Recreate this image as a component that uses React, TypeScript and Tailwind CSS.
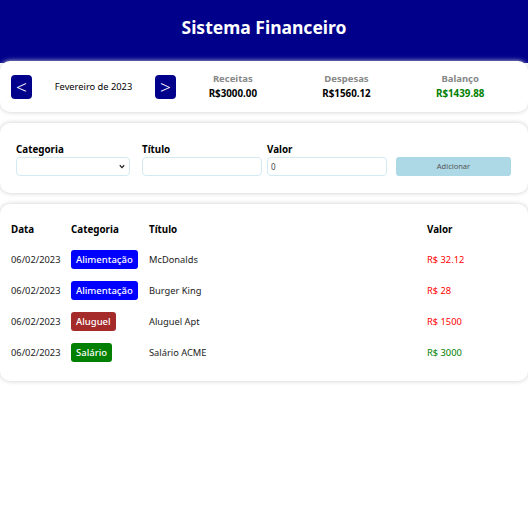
import { useState } from "react";

interface Item {
  date: string;
  category: "food" | "rent" | "salary";
  title: string;
  value: number;
}

const categories = {
  food: { title: "Alimentação", color: "bg-[#0000ff]", expense: true },
  rent: { title: "Aluguel", color: "bg-[#a52a2a]", expense: true },
  salary: { title: "Salário", color: "bg-[#008000]", expense: false },
};

const items: Item[] = [
  { date: "06/02/2023", category: "food", title: "McDonalds", value: 32.12 },
  { date: "06/02/2023", category: "food", title: "Burger King", value: 28 },
  { date: "06/02/2023", category: "rent", title: "Aluguel Apt", value: 1500 },
  { date: "06/02/2023", category: "salary", title: "Salário ACME", value: 3000 },
];

function ResumeItem({ title, value, color }: { title: string; value: number; color?: string }) {
  return (
    <div className="flex-1 flex flex-col items-center">
      <div className="text-[9.5px] font-bold text-[#888] leading-[14px]">{title}</div>
      <div className={`text-[9.8px] font-bold leading-[16px] ${color ?? "text-black"}`}>R${value.toFixed(2)}</div>
    </div>
  );
}

export default function App() {
  const [value, setValue] = useState("0");

  return (
    <div className="min-h-[522px] bg-white font-['Noto_Sans',sans-serif] text-black">
      {/* Header */}
      <div className="h-[63px] bg-[#00008b] flex justify-center pt-[14px]">
        <h1 className="text-[17.5px] font-bold text-white leading-[26px]">Sistema Financeiro</h1>
      </div>

      <div className="-mt-[2px] flex flex-col gap-[11px]">
        {/* Info area */}
        <div className="bg-white rounded-[10px] shadow-[0_0_5px_#ccc] px-[11px] h-[51px] flex items-center">
          <div className="w-[165px] flex items-center">
            <button className="w-[21px] h-[24px] rounded-[4px] bg-[#00008b] text-white text-[19px] font-light leading-[24px] flex items-center justify-center">
              &lt;
            </button>
            <div className="flex-1 text-center text-[9.3px]">Fevereiro de 2023</div>
            <button className="w-[21px] h-[24px] rounded-[4px] bg-[#00008b] text-white text-[19px] font-light leading-[24px] flex items-center justify-center">
              &gt;
            </button>
          </div>
          <div className="flex-1 flex">
            <ResumeItem title="Receitas" value={3000} />
            <ResumeItem title="Despesas" value={1560.12} />
            <ResumeItem title="Balanço" value={1439.88} color="text-[#008000]" />
          </div>
        </div>

        {/* Input area */}
        <div className="bg-white rounded-[10px] shadow-[0_0_5px_#ccc] pl-[16px] pt-[20px] pb-[17px] h-[70px] flex items-end">
          <label className="flex flex-col mr-[12px]">
            <span className="text-[9.8px] font-bold leading-[13px] mb-[1px]">Categoria</span>
            <div className="relative flex">
              <select className="appearance-none block w-[114px] h-[19px] border border-[#d3eaf2] rounded-[4px] bg-white text-[9px] px-[3px] outline-none">
                <option></option>
                <option>Alimentação</option>
                <option>Aluguel</option>
                <option>Salário</option>
              </select>
              <svg className="absolute right-[5px] top-[7px] pointer-events-none" width="6" height="5" viewBox="0 0 6 5">
                <path d="M0.8 1.2 L3 3.6 L5.2 1.2" fill="none" stroke="#222" strokeWidth="1.3" />
              </svg>
            </div>
          </label>
          <label className="flex flex-col mr-[5px]">
            <span className="text-[9.8px] font-bold leading-[13px] mb-[1px]">Título</span>
            <input type="text" className="w-[120px] h-[19px] border border-[#d3eaf2] rounded-[4px] px-[3px] text-[9px] outline-none" />
          </label>
          <label className="flex flex-col mr-[9px]">
            <span className="text-[9.8px] font-bold leading-[13px] mb-[1px]">Valor</span>
            <input
              type="number"
              value={value}
              onChange={(e) => setValue(e.target.value)}
              className="w-[120px] h-[19px] border border-[#d3eaf2] rounded-[4px] px-[3px] text-[8px] text-[#444] outline-none"
            />
          </label>
          <button className="w-[115px] h-[19px] rounded-[3px] bg-[#add8e6] text-[7.5px] text-[#555]">Adicionar</button>
        </div>

        {/* Table area */}
        <div className="bg-white rounded-[10px] shadow-[0_0_5px_#ccc] px-[11px] pt-[12px] pb-[13px]">
          <table className="w-full text-left">
            <thead>
              <tr className="h-[28px]">
                <th className="w-[60px] text-[9.8px] font-bold">Data</th>
                <th className="w-[78px] text-[9.8px] font-bold">Categoria</th>
                <th className="text-[9.8px] font-bold">Título</th>
                <th className="w-[90px] text-[9.8px] font-bold">Valor</th>
              </tr>
            </thead>
            <tbody>
              {items.map((item, index) => {
                const cat = categories[item.category];
                return (
                  <tr key={index} className="h-[31px] text-[9.3px] text-[#222]">
                    <td>{item.date}</td>
                    <td>
                      <span className={`inline-block px-[5px] rounded-[3px] text-white text-[9.5px] font-medium leading-[19px] ${cat.color}`}>
                        {cat.title}
                      </span>
                    </td>
                    <td>{item.title}</td>
                    <td className={cat.expense ? "text-[#ff0000]" : "text-[#008000]"}>R$ {item.value}</td>
                  </tr>
                );
              })}
            </tbody>
          </table>
        </div>
      </div>
    </div>
  );
}
